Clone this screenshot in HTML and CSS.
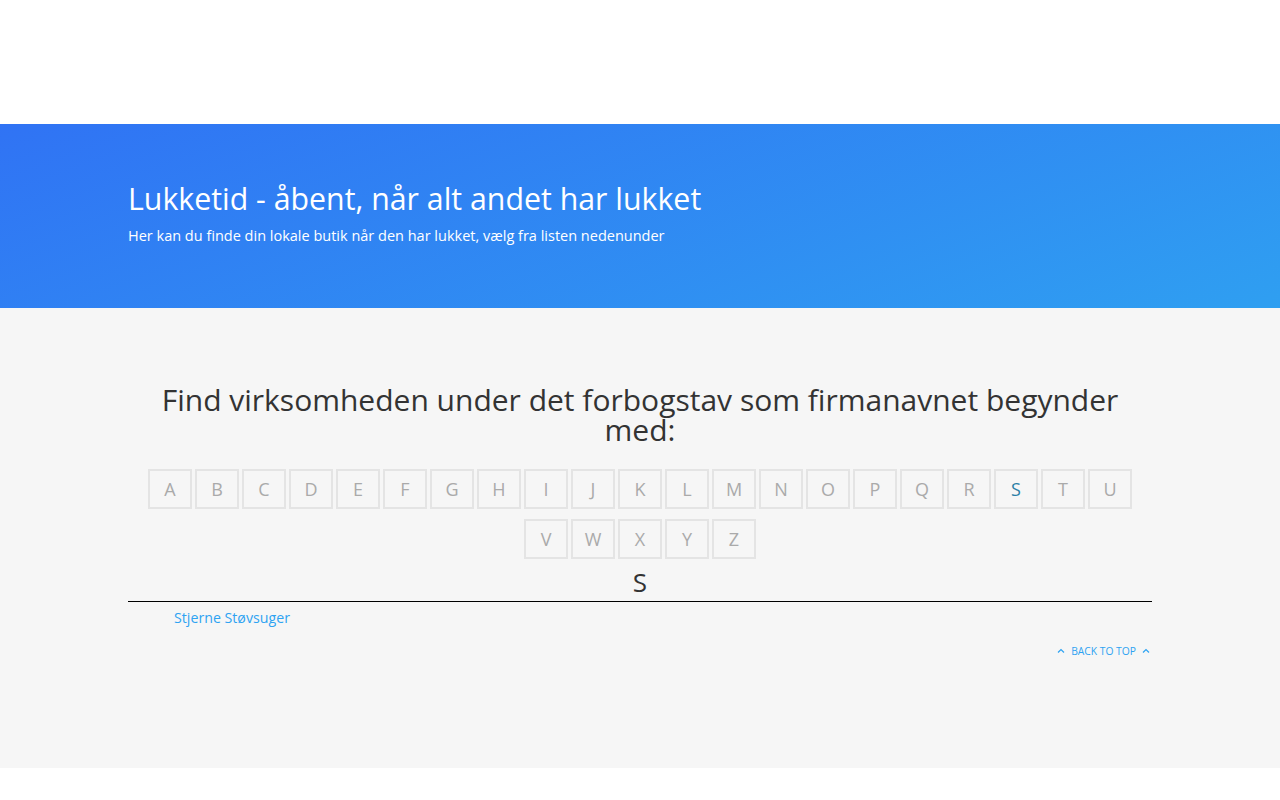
FILE: index.html
```html
<!DOCTYPE html>
<html lang="da">
<head>
    <meta charset="UTF-8">
    <meta name="viewport" content="width=device-width, initial-scale=1.0">
    <title>Lukketid</title>
    <link rel="stylesheet" href="styles.css">
</head>
<body>

    <div class="top-bar"></div>

    <div class="hero">
        <div class="container">
            <h1>Lukketid - åbent, når alt andet har lukket</h1>
            <p class="lead">Her kan du finde din lokale butik når den har lukket, vælg fra listen nedenunder</p>
        </div>
    </div>

    <div class="directory">
        <div class="container">
            <h2>Find virksomheden under det forbogstav som firmanavnet begynder med:</h2>

            <div class="letters">
                <a class="letter">A</a>
                <a class="letter">B</a>
                <a class="letter">C</a>
                <a class="letter">D</a>
                <a class="letter">E</a>
                <a class="letter">F</a>
                <a class="letter">G</a>
                <a class="letter">H</a>
                <a class="letter">I</a>
                <a class="letter">J</a>
                <a class="letter">K</a>
                <a class="letter">L</a>
                <a class="letter">M</a>
                <a class="letter">N</a>
                <a class="letter">O</a>
                <a class="letter">P</a>
                <a class="letter">Q</a>
                <a class="letter">R</a>
                <a class="letter active">S</a>
                <a class="letter">T</a>
                <a class="letter">U</a>
                <a class="letter">V</a>
                <a class="letter">W</a>
                <a class="letter">X</a>
                <a class="letter">Y</a>
                <a class="letter">Z</a>
            </div>

            <h3 class="group-title">S</h3>
            <ul class="company-list">
                <li><a href="#">Stjerne Støvsuger</a></li>
            </ul>

            <div class="back-top">
                <a href="#">
                    <svg width="8" height="6" viewBox="0 0 8 6"><path d="M1 4.5 L4 1.5 L7 4.5" fill="none" stroke="currentColor" stroke-width="1.2"/></svg>
                    Back to top
                    <svg width="8" height="6" viewBox="0 0 8 6"><path d="M1 4.5 L4 1.5 L7 4.5" fill="none" stroke="currentColor" stroke-width="1.2"/></svg>
                </a>
            </div>
        </div>
    </div>

</body>
</html>
```

FILE: styles.css
```css
body {
    margin: 0;
    background-color: #fff;
    font-family: 'Open Sans', 'Liberation Sans', sans-serif;
    color: #333;
}
.container {
    width: 1024px;
    margin: 0 auto;
}
.top-bar {
    height: 124px;
    background-color: #fff;
}
.hero {
    height: 184px;
    box-sizing: border-box;
    padding-top: 55px;
    background: linear-gradient(160deg, #3073f4 0%, #2f9ff1 100%);
    color: #fff;
}
.hero h1 {
    margin: 0;
    font-size: 30.3px;
    line-height: 40px;
    font-weight: 400;
}
.hero .lead {
    margin: 7px 0 0;
    font-size: 14.5px;
    line-height: 20px;
}
.directory {
    background-color: #f6f6f6;
    height: 460px;
    box-sizing: border-box;
    padding-top: 77px;
}
.directory h2 {
    margin: 0;
    padding: 0 30px;
    text-align: center;
    font-size: 30px;
    line-height: 30px;
    font-weight: 400;
    color: #333;
}
.letters {
    display: flex;
    flex-wrap: wrap;
    justify-content: center;
    gap: 10px 3px;
    margin-top: 24px;
}
.letter {
    width: 44px;
    height: 40px;
    box-sizing: border-box;
    border: 2px solid #e4e4e4;
    display: flex;
    align-items: center;
    justify-content: center;
    font-size: 18px;
    color: #aaa;
    text-decoration: none;
}
.letter.active {
    color: #2a7fa6;
}
.group-title {
    margin: 8px 0 0;
    padding-bottom: 4px;
    border-bottom: 1px solid #000;
    text-align: center;
    font-size: 26px;
    line-height: 30px;
    font-weight: 400;
    color: #333;
}
.company-list {
    list-style: none;
    margin: 6px 0 0;
    padding-left: 46px;
}
.company-list li {
    font-size: 14.2px;
    line-height: 20px;
}
.company-list a {
    color: #2ea3f2;
    text-decoration: none;
}
.back-top {
    text-align: right;
    margin-top: 9px;
    padding-right: 2px;
}
.back-top a {
    display: inline-flex;
    align-items: center;
    gap: 6px;
    font-size: 10.3px;
    text-transform: uppercase;
    color: #2ea3f2;
    text-decoration: none;
}
```
